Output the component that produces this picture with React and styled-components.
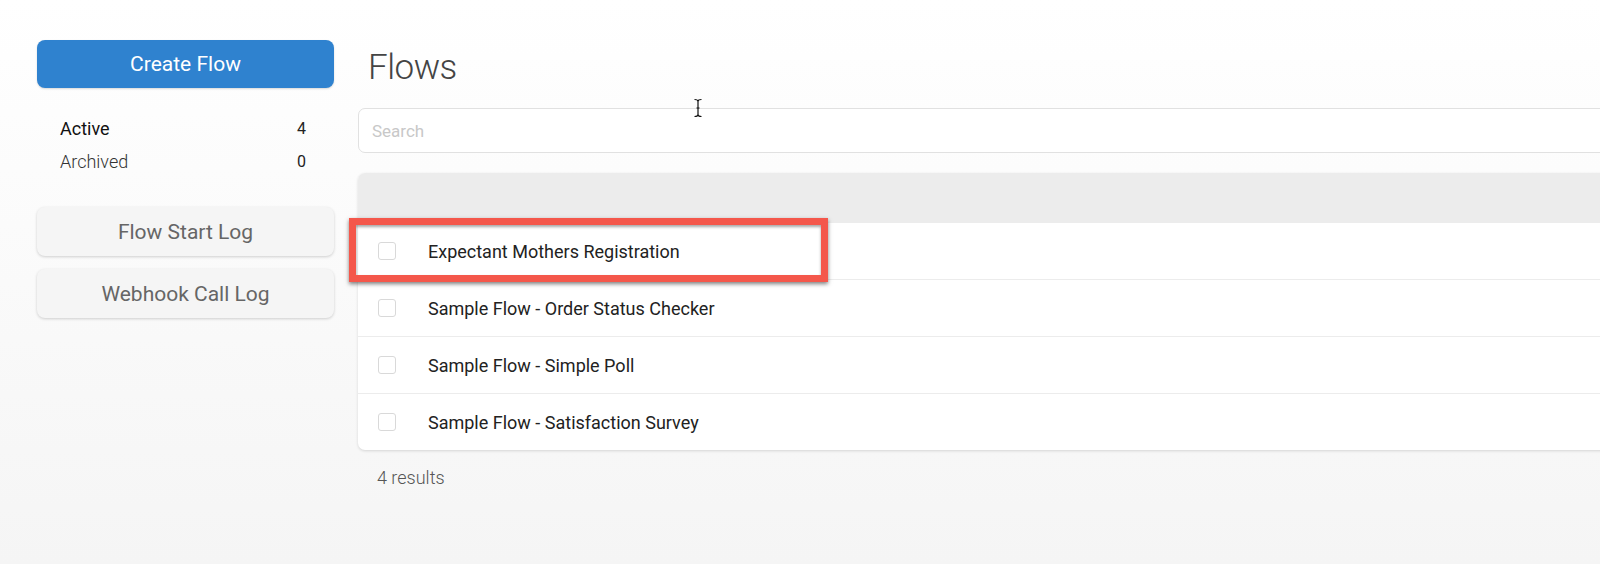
import React from 'react';
import styled, { createGlobalStyle } from 'styled-components';

const GlobalStyle = createGlobalStyle`
  html, body {
    margin: 0;
    padding: 0;
    overflow: hidden;
  }
  body {
    font-family: Roboto, "Liberation Sans", sans-serif;
    background: linear-gradient(#ffffff 0%, #f5f5f5 100%);
    min-height: 564px;
  }
`;

const Page = styled.div`
  position: relative;
  display: flex;
  gap: 24px;
  padding: 40px 0 0 37px;
  height: 564px;
  width: 1600px;
  box-sizing: border-box;
  overflow: hidden;
`;

const Sidebar = styled.aside`
  width: 297px;
  flex-shrink: 0;
  display: flex;
  flex-direction: column;
`;

const PrimaryButton = styled.button`
  height: 48px;
  border: none;
  border-radius: 8px;
  background: #2f82cf;
  color: #fff;
  font-family: inherit;
  font-size: 21px;
  font-weight: 400;
  box-shadow: 0 1px 2px rgba(0, 0, 0, 0.15);
`;

const Counts = styled.ul`
  list-style: none;
  margin: 24px 0 29px;
  padding: 0 28px 0 23px;
`;

const CountItem = styled.li`
  display: flex;
  justify-content: space-between;
  height: 33px;
  align-items: center;
  font-size: 18px;
  color: ${p => (p.active ? '#111' : '#333')};
  font-weight: ${p => (p.active ? 400 : 300)};
`;

const Count = styled.span`
  font-size: 16px;
  font-weight: 400;
  color: #222;
`;

const LogButton = styled.button`
  height: 49px;
  margin-bottom: 13px;
  border: none;
  border-radius: 8px;
  background: #f5f5f5;
  color: #666;
  font-family: inherit;
  font-size: 21px;
  box-shadow: 0 1px 3px rgba(0, 0, 0, 0.18);
`;

const Main = styled.main`
  flex: none;
  width: 1300px;
  display: flex;
  flex-direction: column;
`;

const Title = styled.h1`
  margin: 6px 0 0 10px;
  font-size: 35px;
  font-weight: 300;
  letter-spacing: -0.5px;
  color: #444;
  line-height: 44px;
`;

const Search = styled.input`
  margin-top: 18px;
  height: 45px;
  box-sizing: border-box;
  border: 1px solid #e1e1e1;
  border-radius: 7px;
  padding: 0 13px;
  font-family: inherit;
  font-size: 17px;
  background: #fff;
  outline: none;
  &::placeholder {
    color: #c8c8c8;
  }
`;

const Card = styled.div`
  margin-top: 20px;
  background: #fff;
  border-radius: 7px;
  overflow: hidden;
  box-shadow: 0 1px 3px rgba(0, 0, 0, 0.14);
`;

const HeaderRow = styled.div`
  height: 49px;
  background: #ececec;
`;

const Row = styled.div`
  display: flex;
  align-items: center;
  height: 57px;
  border-top: 1px solid #ececec;
  box-sizing: border-box;
  padding-left: 20px;
  font-size: 18px;
  color: #222;
`;

const Check = styled.span`
  width: 18px;
  height: 18px;
  box-sizing: border-box;
  border: 1px solid #d9d9d9;
  border-radius: 3px;
  margin-right: 32px;
  background: #fff;
`;

const Results = styled.div`
  margin: 17px 0 0 19px;
  font-size: 18px;
  font-weight: 300;
  color: #555;
`;

const Highlight = styled.div`
  position: absolute;
  left: 349px;
  top: 218px;
  width: 479px;
  height: 64px;
  box-sizing: border-box;
  border: 7px solid #f4574b;
  box-shadow: 0 2px 4px rgba(0, 0, 0, 0.5), inset 0 2px 3px rgba(0, 0, 0, 0.35);
  pointer-events: none;
`;

const Cursor = styled.svg`
  position: absolute;
  left: 693px;
  top: 98px;
`;

const flows = [
  'Expectant Mothers Registration',
  'Sample Flow - Order Status Checker',
  'Sample Flow - Simple Poll',
  'Sample Flow - Satisfaction Survey',
];

export default function App() {
  return (
    <>
      <GlobalStyle />
      <Page>
        <Sidebar>
          <PrimaryButton>Create Flow</PrimaryButton>
          <Counts>
            <CountItem active>Active<Count>4</Count></CountItem>
            <CountItem>Archived<Count>0</Count></CountItem>
          </Counts>
          <LogButton>Flow Start Log</LogButton>
          <LogButton>Webhook Call Log</LogButton>
        </Sidebar>
        <Main>
          <Title>Flows</Title>
          <Search placeholder="Search" />
          <Card>
            <HeaderRow />
            {flows.map(f => (
              <Row key={f}>
                <Check />
                {f}
              </Row>
            ))}
          </Card>
          <Results>4 results</Results>
        </Main>
        <Highlight />
        <Cursor width="10" height="20" viewBox="0 0 10 20">
          <path d="M1.5 1.5 Q5 1.5 5 3.5 Q5 1.5 8.5 1.5 M5 3.5 V16.5 M1.5 18.5 Q5 18.5 5 16.5 Q5 18.5 8.5 18.5 M3.5 10 H6.5" stroke="#111" strokeWidth="1.2" fill="none" />
        </Cursor>
      </Page>
    </>
  );
}
